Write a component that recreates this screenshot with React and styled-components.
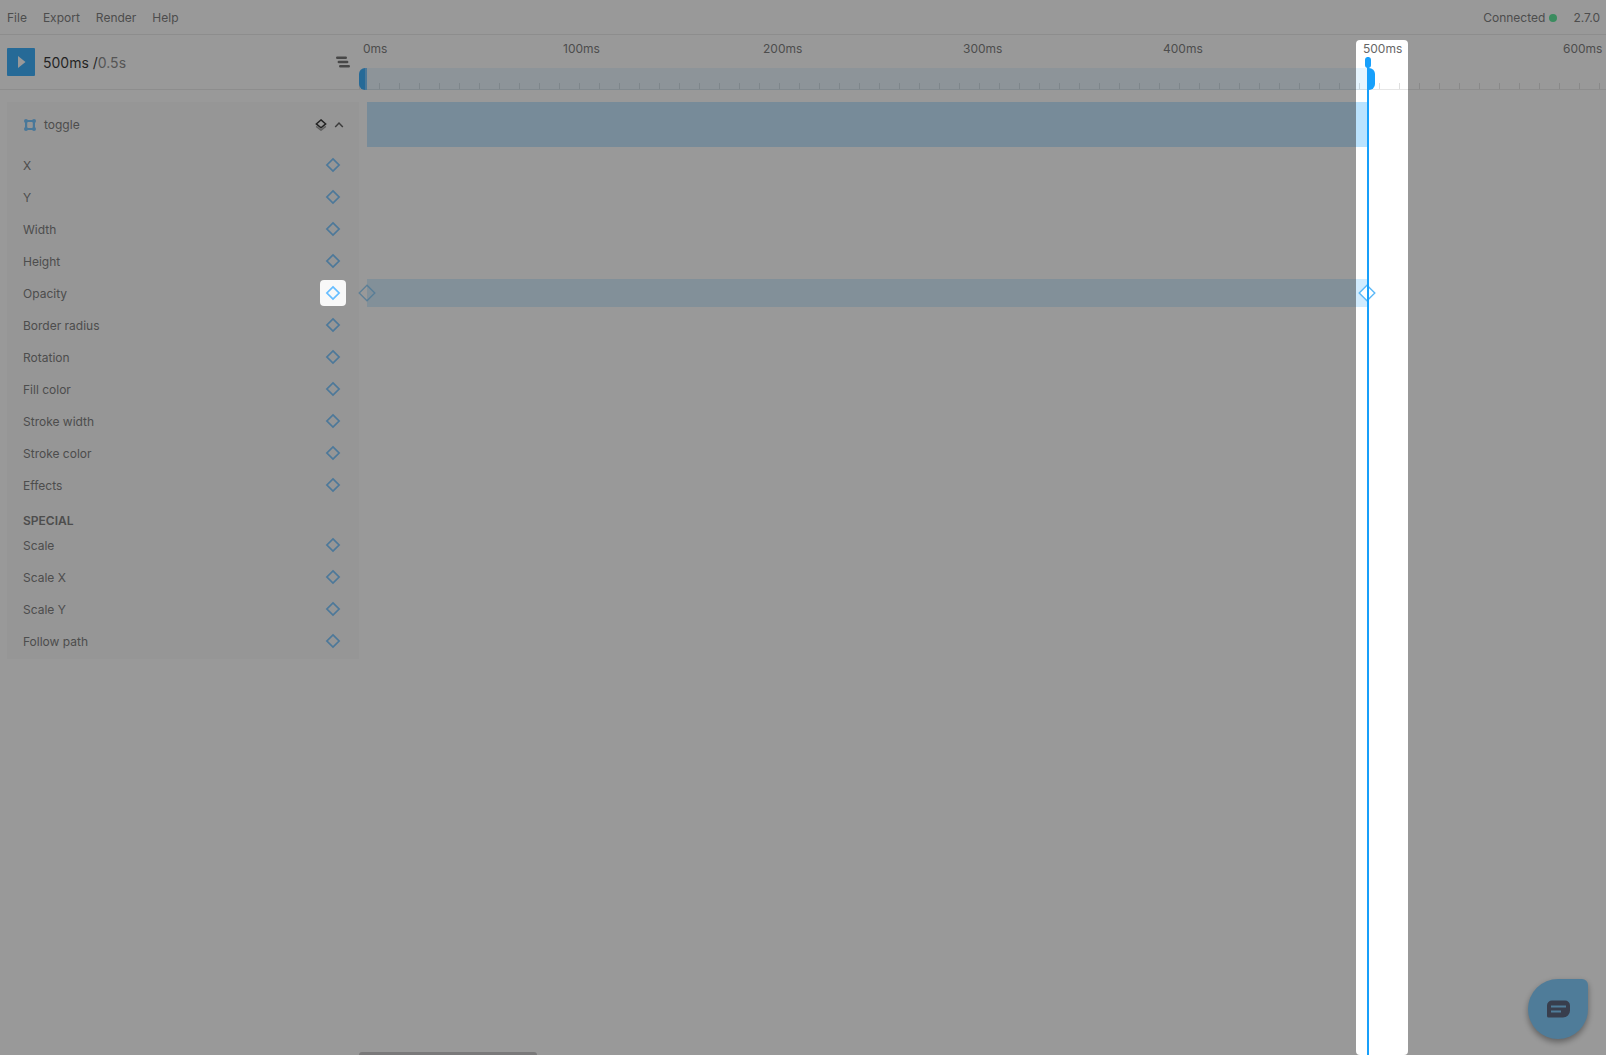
import React from "react";
import styled, { createGlobalStyle } from "styled-components";

const GlobalStyle = createGlobalStyle`
  * { box-sizing: border-box; }
  html, body, #root { height: 100%; }
  body {
    margin: 0;
    overflow: hidden;
    background: #fff;
    font-family: Inter, "Liberation Sans", sans-serif;
    font-size: 12px;
    line-height: 16px;
    color: #666;
  }
  button { font: inherit; color: inherit; background: none; border: 0; padding: 0; }
  svg { display: block; }
`;

const SIDEBAR = 359;
const PX_PER_100MS = 200;
const ORIGIN = 8;
const DURATION = 500;
const END = ORIGIN + (DURATION / 100) * PX_PER_100MS;

const Page = styled.div`
  position: relative;
  height: 100%;
  display: flex;
  flex-direction: column;
  overflow: hidden;
`;

const MenuBar = styled.header`
  display: flex;
  align-items: center;
  justify-content: space-between;
  flex: none;
  height: 35px;
  padding: 2px 6px 0 7px;
  border-bottom: 1px solid #e6e6e6;
`;

const Menu = styled.nav`
  display: flex;
  gap: 16px;
`;

const Status = styled.div`
  display: flex;
  align-items: center;
  gap: 16px;
`;

const Connection = styled.span`
  display: flex;
  align-items: center;
  gap: 4px;
  &::after {
    content: "";
    width: 8px;
    height: 8px;
    border-radius: 50%;
    background: #42e48b;
  }
`;

const TransportBar = styled.div`
  display: flex;
  flex: none;
  height: 55px;
  border-bottom: 1px solid #e6e6e6;
`;

const Transport = styled.div`
  display: flex;
  align-items: center;
  flex: none;
  width: ${SIDEBAR}px;
  padding: 0 8px 0 7px;
`;

const PlayButton = styled.button`
  display: grid;
  place-items: center;
  width: 28px;
  height: 28px;
  border-radius: 1px;
  background: #18a0fb;
`;

const Time = styled.div`
  flex: 1;
  padding: 2px 0 0 8px;
  font-size: 14px;
  line-height: 20px;
  white-space: pre;
  color: #111;
`;

const Total = styled.span`
  color: #777;
`;

const Ruler = styled.div`
  display: flex;
  flex-direction: column;
  justify-content: space-between;
  flex: 1;
  min-width: 0;
  height: 55px;
  overflow: hidden;
`;

const Labels = styled.div`
  display: flex;
  padding: 6px 0 0 4px;
`;

const Label = styled.span`
  flex: none;
  width: ${PX_PER_100MS}px;
`;

const Ticks = styled.div`
  display: flex;
  height: 22px;
  background: repeating-linear-gradient(90deg, #dfdfdf 0 1px, transparent 1px 20px) 0 15px / 100% 6px no-repeat;
`;

const Handle = styled.span`
  flex: none;
  width: 8px;
  background: #18a0fb;
  border-radius: ${(p) => (p.$end ? "0 6px 6px 0" : "6px 0 0 6px")};
  border-right: ${(p) => (p.$end ? "0" : "2px solid #64bcff")};
`;

const Range = styled.span`
  flex: none;
  width: ${END - ORIGIN}px;
  background: rgba(24, 160, 251, 0.11);
`;

const Workspace = styled.main`
  display: flex;
  flex: 1;
  min-height: 0;
  padding-top: 12px;
`;

const Panel = styled.section`
  flex: none;
  align-self: flex-start;
  width: ${SIDEBAR - 7}px;
  margin-left: 7px;
  padding-bottom: 2px;
  background: #f8f8f8;
`;

const LayerHead = styled.div`
  display: flex;
  align-items: center;
  height: 45px;
  margin-bottom: 2px;
  padding: 0 11px 0 16px;
`;

const LayerName = styled.span`
  flex: 1;
  padding-left: 8px;
`;

const HeadButton = styled.button`
  display: grid;
  place-items: center;
  width: 18px;
  height: 18px;
`;

const Property = styled.div`
  display: flex;
  align-items: center;
  justify-content: space-between;
  height: 32px;
  padding: 0 13px 0 16px;
`;

const PropertyName = styled.span`
  padding-top: 2px;
`;

const KeyButton = styled.button`
  display: grid;
  place-items: center;
  width: 26px;
  height: 26px;
`;

const Heading = styled.h2`
  margin: 0;
  padding: 12px 16px 0;
  font-size: 12px;
  line-height: 16px;
  font-weight: 600;
  text-transform: uppercase;
`;

const Tracks = styled.section`
  flex: 1;
  min-width: 0;
  display: flex;
  flex-direction: column;
  padding-left: ${ORIGIN}px;
`;

const LayerTrack = styled.div`
  flex: none;
  width: ${END - ORIGIN}px;
  height: 45px;
  background: #bae3ff;
`;

const PropertyTrack = styled.div`
  position: relative;
  flex: none;
  width: ${END - ORIGIN}px;
  height: 28px;
  margin-top: 132px;
  background: #d1ecff;
`;

const Keyframe = styled.button`
  position: absolute;
  top: 5px;
  left: ${(p) => p.$at}px;
  width: 18px;
  height: 18px;
  margin-left: -9px;
  opacity: ${(p) => (p.$faded ? 0.7 : 1)};
`;

const Playhead = styled.div`
  position: absolute;
  top: 57px;
  bottom: 0;
  left: ${SIDEBAR + END}px;
  width: 2px;
  background: #18a0fb;
  &::before {
    content: "";
    position: absolute;
    top: 0;
    left: -2px;
    width: 6px;
    height: 11px;
    border-radius: 3px;
    background: #18a0fb;
  }
`;

const Scrollbar = styled.div`
  position: absolute;
  left: ${SIDEBAR}px;
  bottom: 0;
  width: 178px;
  height: 3px;
  border-radius: 3px 3px 0 0;
  background: #c1bfc0;
`;

const ChatButton = styled.button`
  position: absolute;
  right: 18px;
  bottom: 16px;
  display: grid;
  place-items: center;
  width: 60px;
  height: 60px;
  border-radius: 30px 6px 30px 30px;
  background: #6ac4ff;
  box-shadow: 0 3px 6px rgba(0, 0, 0, 0.45);
`;

const Overlay = styled.div`
  position: absolute;
  inset: 0;
  display: flex;
  pointer-events: none;
`;

const Shade = styled.div`
  position: relative;
  overflow: hidden;
  flex: ${(p) => (p.$sidebar ? `0 0 ${SIDEBAR}px` : "1")};
`;

const Spotlight = styled.div`
  position: absolute;
  border-radius: 4px;
  box-shadow: 0 0 0 4000px rgba(51, 51, 51, 0.5);
`;

const KeySpotlight = styled(Spotlight)`
  top: 280px;
  left: 320px;
  width: 26px;
  height: 26px;
`;

const TimeSpotlight = styled(Spotlight)`
  top: 40px;
  bottom: 0;
  left: ${END - 11}px;
  width: 52px;
`;

const Diamond = () => (
  <svg width="16" height="16" viewBox="0 0 16 16" fill="none" stroke="#66bdff" strokeWidth="1.7">
    <path d="M8 1.900 14.100 8 8 14.100 1.900 8Z" />
  </svg>
);

const KeyDiamond = ({ fill }) => (
  <svg width="18" height="18" viewBox="0 0 18 18" fill={fill} stroke="#5bb8f7" strokeWidth="1.4">
    <path d="M9 1.200 16.800 9 9 16.800 1.200 9Z" />
  </svg>
);

const FrameIcon = () => (
  <svg width="13" height="12" viewBox="0 0 13 12" fill="#5fbcff">
    <path d="M2 1h10v10H2zM4.200 3v6h5.600V3z" fillRule="evenodd" />
    <circle cx="3" cy="2" r="2" />
    <circle cx="11" cy="2" r="2" />
    <circle cx="3" cy="10" r="2" />
    <circle cx="11" cy="10" r="2" />
  </svg>
);

const properties = ["X", "Y", "Width", "Height", "Opacity", "Border radius", "Rotation", "Fill color", "Stroke width", "Stroke color", "Effects"];
const special = ["Scale", "Scale X", "Scale Y", "Follow path"];
const marks = [0, 100, 200, 300, 400, 500, 600];

const PropertyRow = ({ name }) => (
  <Property>
    <PropertyName>{name}</PropertyName>
    <KeyButton aria-label={`Add ${name} keyframe`}>
      <Diamond />
    </KeyButton>
  </Property>
);

export default function App() {
  return (
    <Page>
      <GlobalStyle />
      <MenuBar>
        <Menu>
          {["File", "Export", "Render", "Help"].map((item) => (
            <button key={item}>{item}</button>
          ))}
        </Menu>
        <Status>
          <Connection>Connected</Connection>
          <span>2.7.0</span>
        </Status>
      </MenuBar>

      <TransportBar>
        <Transport>
          <PlayButton aria-label="Play">
            <svg width="28" height="28" fill="#fff">
              <path d="M11 8v12l7.500-6z" />
            </svg>
          </PlayButton>
          <Time>
            500ms /<Total>0.5s</Total>
          </Time>
          <button aria-label="Stagger layers">
            <svg width="16" height="12" viewBox="0 0 16 12" stroke="#5a5a5a" strokeWidth="2.4" strokeLinecap="round">
              <path d="M2.200 1.800h8.600M3.800 6h8.400M5.200 10.200h8.600" />
            </svg>
          </button>
        </Transport>
        <Ruler>
          <Labels>
            {marks.map((ms) => (
              <Label key={ms}>{ms}ms</Label>
            ))}
          </Labels>
          <Ticks>
            <Handle />
            <Range />
            <Handle $end />
          </Ticks>
        </Ruler>
      </TransportBar>

      <Workspace>
        <Panel>
          <LayerHead>
            <FrameIcon />
            <LayerName>toggle</LayerName>
            <HeadButton aria-label="Layer options">
              <svg width="12" height="12" viewBox="0 0 12 12" fill="none" strokeWidth="1.4">
                <path d="M1.200 7.400 6 11.200 10.800 7.400" stroke="#888" />
                <path d="M6 .9 10.700 4.900 6 8.900 1.300 4.900Z" stroke="#111" />
              </svg>
            </HeadButton>
            <HeadButton aria-label="Collapse layer">
              <svg width="10" height="10" viewBox="0 0 10 10" fill="none" stroke="#444" strokeWidth="1.5">
                <path d="M1.200 7 5 3l3.800 4" />
              </svg>
            </HeadButton>
          </LayerHead>
          {properties.map((name) => (
            <PropertyRow key={name} name={name} />
          ))}
          <Heading>Special</Heading>
          {special.map((name) => (
            <PropertyRow key={name} name={name} />
          ))}
        </Panel>
        <Tracks>
          <LayerTrack />
          <PropertyTrack>
            <Keyframe $at={0} $faded aria-label="Keyframe at 0ms">
              <KeyDiamond fill="none" />
            </Keyframe>
            <Keyframe $at={END - ORIGIN} aria-label="Keyframe at 500ms">
              <KeyDiamond fill="#fff" />
            </Keyframe>
          </PropertyTrack>
        </Tracks>
      </Workspace>

      <Playhead />
      <Scrollbar />
      <ChatButton aria-label="Open chat">
        <svg width="24" height="18" viewBox="0 0 24 18">
          <path d="M6 .5h13a5 5 0 0 1 5 5v5a7 7 0 0 1-7 7H2.500A1.500 1.500 0 0 1 1 16V5.500a5 5 0 0 1 5-5Z" fill="#3d4866" />
          <path d="M5 6.500h15M5 11.500h10" stroke="#6ac4ff" strokeWidth="2" />
        </svg>
      </ChatButton>

      <Overlay>
        <Shade $sidebar>
          <KeySpotlight />
        </Shade>
        <Shade>
          <TimeSpotlight />
        </Shade>
      </Overlay>
    </Page>
  );
}
